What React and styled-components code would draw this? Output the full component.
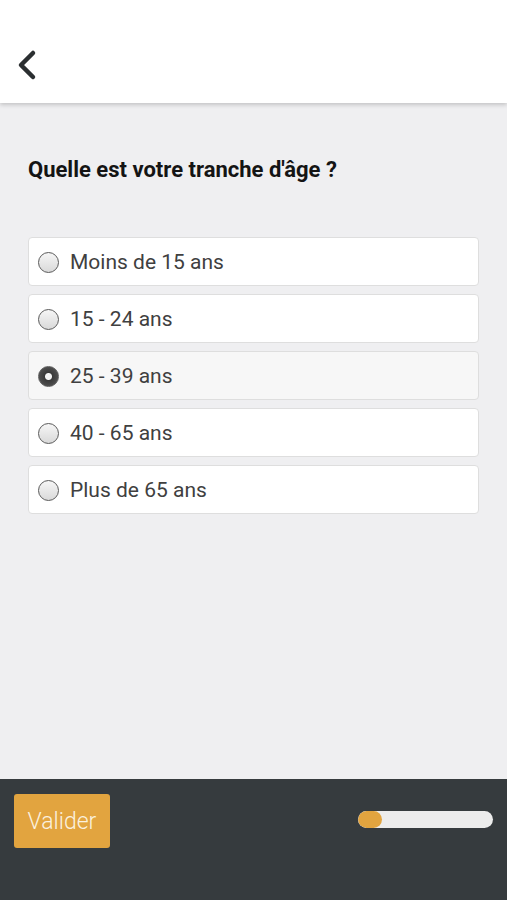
import React, { useState } from "react";
import styled, { createGlobalStyle } from "styled-components";

const GlobalStyle = createGlobalStyle`
  html, body {
    margin: 0;
    padding: 0;
    background: #efeff1;
    font-family: Roboto, "Liberation Sans", sans-serif;
  }
  * { box-sizing: border-box; }
`;

const OPTIONS = [
  "Moins de 15 ans",
  "15 - 24 ans",
  "25 - 39 ans",
  "40 - 65 ans",
  "Plus de 65 ans",
];

const App = () => {
  const [selected, setSelected] = useState(2);
  const progress = 18;

  return (
    <Page>
      <GlobalStyle />
      <Header>
        <BackButton aria-label="Retour">
          <svg width="24" height="32" viewBox="0 0 24 32" fill="none">
            <path
              d="M18 4 L6 16 L18 28"
              stroke="#2b2f31"
              strokeWidth="4.5"
              strokeLinecap="round"
              strokeLinejoin="round"
            />
          </svg>
        </BackButton>
      </Header>

      <Content>
        <Question>Quelle est votre tranche d'âge ?</Question>
        <OptionList>
          {OPTIONS.map((label, i) => (
            <Option
              key={label}
              $active={i === selected}
              onClick={() => setSelected(i)}
            >
              <Radio $checked={i === selected} />
              <OptionLabel>{label}</OptionLabel>
            </Option>
          ))}
        </OptionList>
      </Content>

      <Footer>
        <SubmitButton>Valider</SubmitButton>
        <Progress>
          <ProgressFill style={{ width: `${progress}%` }} />
        </Progress>
      </Footer>
    </Page>
  );
};

const Page = styled.div`
  display: flex;
  flex-direction: column;
  height: 900px;
  background: #efeff1;
`;

const Header = styled.header`
  height: 103px;
  flex-shrink: 0;
  background: #ffffff;
  display: flex;
  align-items: center;
  padding-left: 15px;
  padding-top: 27px;
  box-shadow: 0 2px 4px rgba(0, 0, 0, 0.18);
  position: relative;
  z-index: 1;
`;

const BackButton = styled.button`
  border: none;
  background: none;
  padding: 0;
  display: flex;
  cursor: pointer;
`;

const Content = styled.main`
  flex: 1;
  padding: 54px 28px 0;
`;

const Question = styled.h1`
  margin: 0 0 54px;
  font-size: 22px;
  font-weight: 700;
  color: #141414;
  line-height: 26px;
`;

const OptionList = styled.div`
  display: flex;
  flex-direction: column;
  gap: 8px;
`;

const Option = styled.label`
  display: flex;
  align-items: center;
  gap: 11px;
  height: 49px;
  padding: 0 9px;
  background: ${(p) => (p.$active ? "#f7f7f7" : "#ffffff")};
  border: 1px solid #dedede;
  border-radius: 4px;
  cursor: pointer;
`;

const Radio = styled.span`
  width: 21px;
  height: 21px;
  border-radius: 50%;
  flex-shrink: 0;
  margin-top: 2px;
  border: 1.5px solid #5a5a5a;
  background: ${(p) =>
    p.$checked
      ? "radial-gradient(circle, #f4f4f4 0 3px, #3a3a3a 4px, #5c5c5c 100%)"
      : "linear-gradient(#f6f6f6, #d9d9d9)"};
`;

const OptionLabel = styled.span`
  font-size: 21px;
  color: #404040;
`;

const Footer = styled.footer`
  height: 121px;
  flex-shrink: 0;
  background: #363b3e;
  display: flex;
  align-items: flex-start;
  justify-content: space-between;
  padding: 15px 14px 0;
`;

const SubmitButton = styled.button`
  width: 96px;
  height: 54px;
  padding: 0;
  border: none;
  border-radius: 3px;
  background: #e2a43f;
  color: #fbf1df;
  font-family: Roboto, "Liberation Sans", sans-serif;
  font-size: 23px;
  font-weight: 300;
  cursor: pointer;
`;

const Progress = styled.div`
  width: 135px;
  height: 17px;
  margin-top: 17px;
  background: #ececec;
  border-radius: 9px;
  overflow: hidden;
`;

const ProgressFill = styled.div`
  height: 100%;
  background: #e2a43f;
  border-radius: 9px;
`;

export default App;
